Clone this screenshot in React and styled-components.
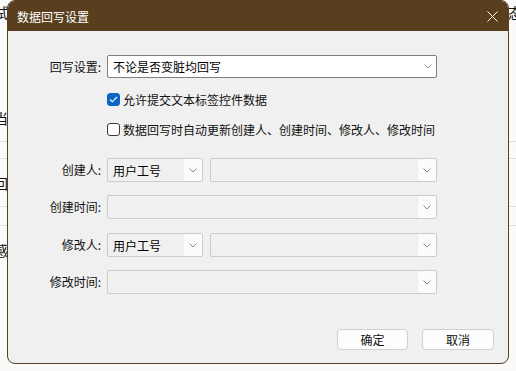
import React from "react";
import styled, { createGlobalStyle } from "styled-components";

const Global = createGlobalStyle`
  html, body { margin: 0; padding: 0; }
  body {
    background: #fafafa;
    font-family: "Noto Sans CJK SC", "Noto Sans", sans-serif;
    overflow: hidden;
  }
`;

const Page = styled.div`
  position: relative;
  width: 516px;
  height: 371px;
  overflow: hidden;
  background: #fafafa;
`;

const BgHeader = styled.div`
  display: flex;
  justify-content: space-between;
  height: 30px;
  margin: 0 -6px;
  padding-top: 5px;
  box-sizing: border-box;
  font-size: 14px;
  line-height: 14px;
  color: #111;
`;

const BgRow = styled.div`
  height: ${(p) => p.$h}px;
  box-sizing: border-box;
  padding-top: ${(p) => p.$pad}px;
  margin-left: -6px;
  border-bottom: ${(p) => (p.$line ? "1px solid #dedede" : "none")};
  font-size: 14px;
  line-height: 14px;
  color: #111;
`;

const Dialog = styled.div`
  position: absolute;
  left: 7px;
  top: 0;
  width: 502px;
  height: 364px;
  box-sizing: border-box;
  border: 1px solid #5a3f1f;
  border-radius: 8px;
  background: #f0f0f0;
  overflow: hidden;
  display: flex;
  flex-direction: column;
`;

const TitleBar = styled.div`
  height: 30px;
  flex: none;
  background: #5a3f1f;
  display: flex;
  align-items: center;
  justify-content: space-between;
  padding: 0 10px 0 9px;
  color: #fff;
  font-size: 12px;
`;

const CloseBtn = styled.div`
  width: 12px;
  height: 12px;
  display: flex;
  align-items: center;
  justify-content: center;
`;

const Body = styled.div`
  flex: 1;
  display: flex;
  flex-direction: column;
  padding: 24px 14px 0 40px;
`;

const FormRow = styled.div`
  display: flex;
  align-items: center;
  margin-top: ${(p) => p.$mt || 0}px;
`;

const Label = styled.div`
  width: 53px;
  margin-right: 6px;
  text-align: right;
  font-size: 12px;
  color: #111;
  white-space: nowrap;
  line-height: 14px;
`;

const Combo = styled.div`
  width: ${(p) => p.$w}px;
  height: ${(p) => p.$h || 24}px;
  box-sizing: border-box;
  border: 1px solid ${(p) => (p.$disabled ? "#cbcbcb" : "#7f7f7f")};
  border-radius: 2px;
  background: ${(p) => (p.$disabled ? "#f0f0f0" : "#fff")};
  display: flex;
  align-items: stretch;
  margin-right: ${(p) => p.$mr || 0}px;
  overflow: hidden;
`;

const ComboText = styled.div`
  flex: 1;
  display: flex;
  align-items: center;
  padding-left: 5px;
  font-size: 12px;
  color: #000;
  white-space: nowrap;
`;

const ComboArrow = styled.div`
  width: ${(p) => (p.$disabled ? 18 : 17)}px;
  display: flex;
  align-items: center;
  justify-content: center;
  background: ${(p) => (p.$disabled ? "#fbfbfb" : "transparent")};
`;

const CheckRow = styled.label`
  display: flex;
  align-items: center;
  height: 20px;
  margin-left: 59px;
  margin-top: ${(p) => p.$mt}px;
  font-size: 12px;
  color: #111;
  white-space: nowrap;
`;

const Box = styled.span`
  width: 13px;
  height: 13px;
  box-sizing: border-box;
  border-radius: 3px;
  margin-right: 3px;
  display: flex;
  align-items: center;
  justify-content: center;
  background: ${(p) => (p.$checked ? "#0b66c2" : "#fff")};
  border: 1px solid ${(p) => (p.$checked ? "#0b66c2" : "#3a3a3a")};
`;

const Footer = styled.div`
  display: flex;
  justify-content: flex-end;
  gap: 14px;
  margin-top: 35px;
`;

const Button = styled.button`
  width: ${(p) => p.$w}px;
  height: 21px;
  box-sizing: border-box;
  border: 1px solid #d0d0d0;
  border-radius: 4px;
  background: #fdfdfd;
  font-family: "Noto Sans CJK SC", sans-serif;
  font-size: 12px;
  color: #111;
  padding: 0;
  display: flex;
  align-items: center;
  justify-content: center;
`;

const Chevron = () => (
  <svg width="8" height="5" viewBox="0 0 8 5">
    <polyline points="0.5,0.5 4,4 7.5,0.5" fill="none" stroke="#8a8a8a" strokeWidth="1" />
  </svg>
);

const Select = ({ w, h, text, disabled, mr }) => (
  <Combo $w={w} $h={h} $disabled={disabled} $mr={mr}>
    <ComboText>{text}</ComboText>
    <ComboArrow $disabled={disabled}>
      <Chevron />
    </ComboArrow>
  </Combo>
);

const Check = ({ checked }) => (
  <Box $checked={checked}>
    {checked && (
      <svg width="9" height="7" viewBox="0 0 9 7">
        <polyline points="1,3.5 3.3,5.8 8,1" fill="none" stroke="#fff" strokeWidth="1.1" />
      </svg>
    )}
  </Box>
);

export default function App() {
  return (
    <Page>
      <Global />
      <BgHeader>
        <span>试</span>
        <span>态</span>
      </BgHeader>
      <BgRow $h={112} $pad={81} $line>当</BgRow>
      <BgRow $h={17} $pad={0} $line />
      <BgRow $h={48} $pad={17} $line>回</BgRow>
      <BgRow $h={19} $pad={0} $line />
      <BgRow $h={40} $pad={17}>感</BgRow>

      <Dialog>
        <TitleBar>
          <span>数据回写设置</span>
          <CloseBtn>
            <svg width="11" height="11" viewBox="0 0 11 11">
              <path d="M0.5 0.5 L10.5 10.5 M10.5 0.5 L0.5 10.5" stroke="#fff" strokeWidth="1" />
            </svg>
          </CloseBtn>
        </TitleBar>
        <Body>
          <FormRow>
            <Label>回写设置:</Label>
            <Select w={330} h={23} text="不论是否变脏均回写" />
          </FormRow>
          <CheckRow $mt={11}>
            <Check checked />
            允许提交文本标签控件数据
          </CheckRow>
          <CheckRow $mt={10}>
            <Check />
            数据回写时自动更新创建人、创建时间、修改人、修改时间
          </CheckRow>
          <FormRow $mt={19}>
            <Label>创建人:</Label>
            <Select w={96} text="用户工号" disabled mr={7} />
            <Select w={227} disabled />
          </FormRow>
          <FormRow $mt={13}>
            <Label>创建时间:</Label>
            <Select w={330} disabled />
          </FormRow>
          <FormRow $mt={14}>
            <Label>修改人:</Label>
            <Select w={96} text="用户工号" disabled mr={7} />
            <Select w={227} disabled />
          </FormRow>
          <FormRow $mt={13}>
            <Label>修改时间:</Label>
            <Select w={330} disabled />
          </FormRow>
          <Footer>
            <Button $w={71}>确定</Button>
            <Button $w={72}>取消</Button>
          </Footer>
        </Body>
      </Dialog>
    </Page>
  );
}
